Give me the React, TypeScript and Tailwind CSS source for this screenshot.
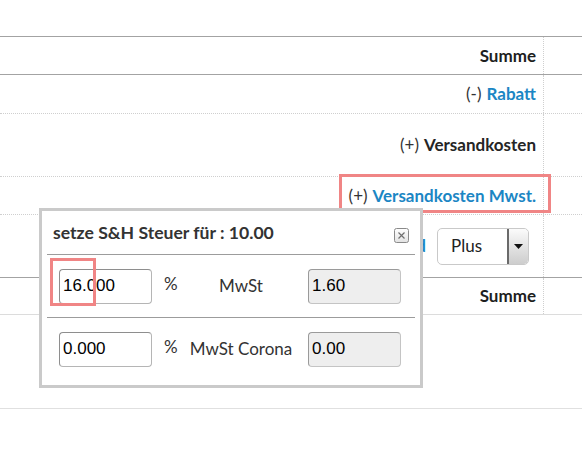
import React from "react";

const lato = { fontFamily: "Lato, 'Open Sans', sans-serif" };

function Zeile({
  children,
  className,
}: {
  children?: React.ReactNode;
  className: string;
}) {
  return (
    <div className={"flex " + className}>
      <div className="flex flex-1 items-center justify-end pr-[7px]">{children}</div>
      <div className="w-[39px] border-l border-dotted border-[#cfcfcf]" />
    </div>
  );
}

function SchliessenIcon() {
  return (
    <svg width="15" height="15" viewBox="0 0 15 15" className="mt-[3px]">
      <defs>
        <linearGradient id="sg" x1="0" y1="0" x2="0" y2="1">
          <stop offset="0" stopColor="#ffffff" />
          <stop offset="1" stopColor="#e2e2e2" />
        </linearGradient>
      </defs>
      <rect x="0.5" y="0.5" width="14" height="14" rx="2" fill="url(#sg)" stroke="#8a8a8a" />
      <path d="M4.5 4.5 L10.5 10.5 M10.5 4.5 L4.5 10.5" stroke="#6f6f6f" strokeWidth="1.2" />
    </svg>
  );
}

function SteuerZeile({
  prozent,
  label,
  betrag,
}: {
  prozent: string;
  label: string;
  betrag: string;
}) {
  return (
    <div className="flex h-[62px] items-center pl-[17px]">
      <div
        className="flex h-[35px] w-[93px] items-center rounded-[4px] border border-[#b5b5b5] border-t-[#8e8e8e] border-l-[#8e8e8e] bg-white pl-[3px] text-[17px] text-black"
        style={{ fontFamily: "'Liberation Sans', Arial, sans-serif" }}
      >
        {prozent}
      </div>
      <div className="ml-[12px] -mt-[4px] w-[21px] text-[17px] text-[#333]">%</div>
      <div className="w-[112px] text-center text-[17px] text-[#333]">{label}</div>
      <div
        className="ml-[11px] flex h-[35px] w-[93px] items-center rounded-[4px] border border-[#c4c4c4] border-t-[#9a9a9a] border-l-[#9a9a9a] bg-[#eeeeee] pl-[3px] text-[17px] text-black"
        style={{ fontFamily: "'Liberation Sans', Arial, sans-serif" }}
      >
        {betrag}
      </div>
    </div>
  );
}

export default function App() {
  return (
    <div className="relative h-[469px] w-[582px] overflow-hidden bg-white text-[16px] text-[#222]" style={lato}>
      <div className="h-[36px]" />
      <Zeile className="h-[39px] border-y border-[#a3a3a3]">
        <span className="font-bold text-[17px] text-[#1e1e1e]">Summe</span>
      </Zeile>
      <Zeile className="h-[39px] border-b border-dotted border-[#cfcfcf]">
        <span className="text-[17px] text-[#333]">(-)</span>
        <span className="ml-[5px] font-bold text-[17px] text-[#1b86c4]">Rabatt</span>
      </Zeile>
      <Zeile className="h-[63px] border-b border-dotted border-[#cfcfcf]">
        <span className="text-[17px] text-[#333]">(+)</span>
        <span className="ml-[5px] font-bold text-[17px] text-[#252525]">Versandkosten</span>
      </Zeile>
      <Zeile className="h-[38px] border-b border-dotted border-[#cfcfcf]">
        <span className="text-[17px] text-[#333]">(+)</span>
        <span className="ml-[5px] font-bold text-[17px] text-[#1b86c4]">Versandkosten Mwst.</span>
      </Zeile>
      <Zeile className="h-[63px] border-b border-[#a3a3a3]">
        <span className="mr-[11px] font-bold text-[17px] text-[#1b86c4]">Versand</span>
        <div className="mr-[7px] flex h-[37px] w-[92px] overflow-hidden rounded-[5px] border border-[#c9c9c9] bg-white">
          <div className="flex flex-1 items-center pl-[13px] text-[17px] text-[#222]">Plus</div>
          <div className="flex w-[21px] items-center justify-center rounded-r-[4px] border-l-2 border-[#6a6a6a] bg-gradient-to-b from-[#fbfbfb] to-[#cdcdcd]">
            <svg width="9" height="5" viewBox="0 0 9 5">
              <path d="M0 0 H9 L4.5 5 Z" fill="#111" />
            </svg>
          </div>
        </div>
      </Zeile>
      <Zeile className="h-[37px] border-b border-[#dcdcdc]">
        <span className="font-bold text-[17px] text-[#1e1e1e]">Summe</span>
      </Zeile>
      <div className="h-[94px] border-b border-[#e0e0e0]" />

      {/* Hervorhebung */}
      <div className="absolute left-[339px] top-[174px] h-[39px] w-[212px] border-[3px] border-[#f08585]" />

      {/* Dialog */}
      <div className="absolute left-[39px] top-[208px] h-[180px] w-[384px] border-[3px] border-[#cacaca] bg-white">
        <div className="flex h-[43px] items-center justify-between pl-[11px] pr-[11px] pt-[2px]">
          <span className="font-bold text-[17.6px] text-[#333]">setze S&amp;H Steuer für : 10.00</span>
          <SchliessenIcon />
        </div>
        <div className="mx-[5px] border-t border-[#9c9c9c]" />
        <SteuerZeile prozent="16.000" label="MwSt" betrag="1.60" />
        <div className="mx-[5px] border-t border-[#9c9c9c]" />
        <SteuerZeile prozent="0.000" label="MwSt Corona" betrag="0.00" />
        <div className="absolute left-[8px] top-[47px] h-[48px] w-[46px] border-[3px] border-[#f08585]" />
      </div>
    </div>
  );
}
